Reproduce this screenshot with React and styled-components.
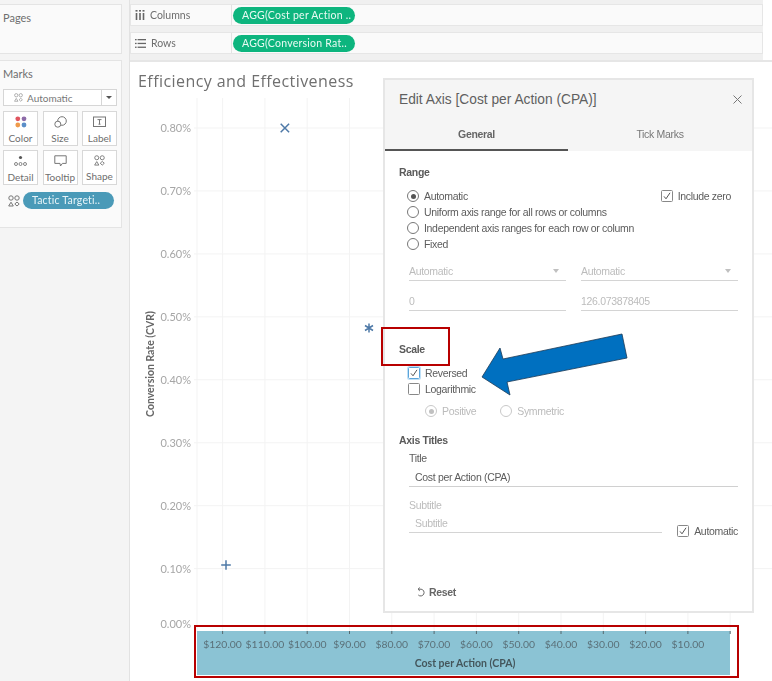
import React from 'react';
import styled, { createGlobalStyle } from 'styled-components';

const GlobalStyle = createGlobalStyle`
  html, body {
    margin: 0;
    padding: 0;
    background: #fff;
  }
  * {
    box-sizing: border-box;
  }
`;

const Root = styled.div`
  position: relative;
  width: 772px;
  height: 681px;
  overflow: hidden;
  background: #fff;
`;

const Shot = styled.div`
  position: relative;
  display: grid;
  grid-template-columns: 130px 1fr;
  height: 100%;
  filter: blur(0.45px);
  font-family: 'Lato', 'Liberation Sans', sans-serif;
`;

const LeftColumn = styled.div`
  display: flex;
  flex-direction: column;
  gap: 6px;
  padding: 4px 7px 0 0;
  background: #f4f4f4;
  border-right: 1px solid #e2e2e2;
`;

const Card = styled.section`
  height: ${p => p.$height}px;
  padding: 6px 4px 0 3px;
  background: #fafafa;
  border: 1px solid #e4e4e4;
  border-left: 0;
`;

const CardTitle = styled.div`
  height: 16px;
  font-size: 11px;
  line-height: 14px;
  color: #6e6e6e;
`;

const MarkSelect = styled.div`
  display: flex;
  align-items: center;
  height: 17px;
  margin-top: 6px;
  padding-left: 10px;
  gap: 4px;
  font-size: 10px;
  color: #777;
  background: #fff;
  border: 1px solid #d6d6d6;
`;

const SelectCaret = styled.span`
  display: flex;
  align-items: center;
  justify-content: center;
  align-self: stretch;
  width: 15px;
  margin-left: auto;
  border-left: 1px solid #d6d6d6;
  &::after {
    content: '';
    border-left: 3px solid transparent;
    border-right: 3px solid transparent;
    border-top: 3px solid #555;
  }
`;

const MarkGrid = styled.div`
  display: grid;
  grid-template-columns: repeat(3, 35px);
  grid-auto-rows: 35px;
  justify-content: space-between;
  row-gap: 4px;
  margin-top: 5px;
`;

const MarkButton = styled.div`
  display: flex;
  flex-direction: column;
  align-items: center;
  padding-top: 4px;
  font-size: 10px;
  line-height: 13px;
  color: #6e6e6e;
  background: #fff;
  border: 1px solid #d8d8d8;
  svg {
    display: block;
    margin-bottom: 4px;
  }
`;

const MarkField = styled.div`
  display: flex;
  align-items: center;
  gap: 3px;
  margin-top: 7px;
  padding-left: 5px;
`;

const FieldPill = styled.div`
  height: 17px;
  width: 91px;
  padding-left: 9px;
  font-size: 10.5px;
  line-height: 16px;
  letter-spacing: 0.2px;
  color: #e8f4f8;
  background: #4a9ab8;
  border-radius: 9px;
`;

const RightColumn = styled.div`
  display: flex;
  flex-direction: column;
  min-width: 0;
`;

const ShelfStrip = styled.div`
  display: flex;
  flex-direction: column;
  gap: 6px;
  width: 633px;
  height: 60px;
  padding-top: 4px;
  background: #f0f0f0;
`;

const Shelf = styled.div`
  display: flex;
  align-items: center;
  height: 22px;
  background: #fafafa;
  border: 1px solid #e6e6e6;
`;

const ShelfLabel = styled.div`
  display: flex;
  align-items: center;
  gap: 5px;
  width: 101px;
  height: 100%;
  padding-left: 4px;
  font-size: 10.5px;
  color: #6e6e6e;
  border-right: 1px solid #e2e2e2;
`;

const ShelfPill = styled.div`
  width: 122px;
  height: 17px;
  margin-left: 1px;
  padding-left: 9px;
  font-size: 10.5px;
  line-height: 16px;
  letter-spacing: 0.25px;
  color: #eafaf3;
  background: #0db57e;
  border-radius: 9px;
`;

const ChartPanel = styled.div`
  flex: 1;
  background: #fff;
  border-top: 2px solid #e6e6e6;
  svg {
    display: block;
  }
`;

const Dialog = styled.div`
  position: absolute;
  top: 80px;
  left: 385px;
  width: 367px;
  height: 531px;
  background: #fff;
  box-shadow: 0 0 0 2px #e6e6e6;
  font-family: 'Liberation Sans', Arial, sans-serif;
  font-size: 10.5px;
  letter-spacing: -0.32px;
  color: #555;
`;

const DialogHead = styled.div`
  height: 71px;
  background: #f5f5f5;
`;

const DialogTitle = styled.div`
  display: flex;
  align-items: center;
  justify-content: space-between;
  height: 39px;
  padding: 0 10px 0 14px;
  font-size: 13.75px;
  letter-spacing: 0;
  color: #5f5f5f;
`;

const Tabs = styled.div`
  display: grid;
  grid-template-columns: 183px 1fr;
  height: 32px;
`;

const Tab = styled.div`
  text-align: center;
  font-size: 10.5px;
  line-height: 30px;
  font-weight: ${p => (p.$active ? 700 : 400)};
  color: ${p => (p.$active ? '#666' : '#777')};
  border-bottom: 2.5px solid ${p => (p.$active ? '#555' : 'transparent')};
`;

const DialogBody = styled.div`
  padding: 0 14px;
`;

const Heading = styled.div`
  height: 14px;
  margin-top: ${p => p.$top}px;
  font-weight: 700;
  font-size: 10.5px;
  line-height: 14px;
  color: #5a5a5a;
`;

const Options = styled.div`
  margin-top: 9px;
`;

const OptionRow = styled.div`
  display: flex;
  align-items: center;
  justify-content: space-between;
  height: ${p => p.$height || 16}px;
  padding: 0 7px 0 9px;
`;

const Option = styled.label`
  display: flex;
  align-items: center;
  gap: 5px;
  color: ${p => (p.$muted ? '#bbb' : '#5c5c5c')};
`;

const Radio = styled.span`
  position: relative;
  display: block;
  flex: none;
  width: 12px;
  height: 12px;
  margin-left: -1px;
  border-radius: 50%;
  border: 1px solid ${p => (p.$muted ? '#c8c8c8' : '#777')};
  &::after {
    content: '';
    display: ${p => (p.$on ? 'block' : 'none')};
    position: absolute;
    inset: 2.5px;
    border-radius: 50%;
    background: ${p => (p.$muted ? '#c0c0c0' : '#555')};
  }
`;

const Check = styled.span`
  display: flex;
  align-items: center;
  justify-content: center;
  flex: none;
  width: 12px;
  height: 12px;
  border-radius: 1.5px;
  border: 1px solid ${p => (p.$focus ? '#5ba4d9' : '#888')};
  box-shadow: ${p => (p.$focus ? '0 0 0 1px #bfe0f7' : 'none')};
`;

const TwoFields = styled.div`
  display: grid;
  grid-template-columns: 157px 157px;
  column-gap: 15px;
  margin: ${p => p.$top}px 0 0 10px;
`;

const Field = styled.div`
  display: flex;
  align-items: center;
  justify-content: space-between;
  height: 19px;
  padding: 0 7px 0 ${p => p.$indent || 0}px;
  color: ${p => (p.$muted ? '#bcbcbc' : '#5c5c5c')};
  border-bottom: 1px solid ${p => (p.$muted ? '#d4d4d4' : '#d0d0d0')};
  ${p => p.$caret && `
    &::after {
      content: '';
      border-left: 3.5px solid transparent;
      border-right: 3.5px solid transparent;
      border-top: 4px solid #c0c0c0;
    }
  `}
`;

const SubRadios = styled.div`
  display: flex;
  align-items: center;
  gap: 25px;
  height: 16px;
  margin-top: 6px;
  padding-left: 27px;
`;

const Indented = styled.div`
  margin-left: 10px;
`;

const FieldLabel = styled.div`
  height: 14px;
  margin: ${p => p.$top}px 0 ${p => p.$bottom || 0}px;
  line-height: 14px;
  color: ${p => (p.$muted ? '#bcbcbc' : '#5c5c5c')};
`;

const SubtitleRow = styled.div`
  display: flex;
  align-items: flex-end;
  justify-content: space-between;
  margin-top: 2px;
`;

const SubtitleField = styled.div`
  width: 253px;
`;

const AutoOption = styled(Option)`
  margin-bottom: -4px;
`;

const ResetButton = styled.div`
  display: flex;
  align-items: center;
  gap: 4px;
  height: 14px;
  margin: 52px 0 0 17px;
  font-weight: 700;
  color: #666;
`;

const Annotations = styled.div`
  position: absolute;
  inset: 0;
  pointer-events: none;
`;

const RedBox = styled.div`
  position: absolute;
  left: ${p => p.$x}px;
  top: ${p => p.$y}px;
  width: ${p => p.$w}px;
  height: ${p => p.$h}px;
  border: 2px solid #b80000;
`;

const ArrowSvg = styled.svg`
  position: absolute;
  top: 0;
  left: 0;
`;

const ColumnsIcon = () => (
  <svg width="10" height="10" viewBox="0 0 10 10" fill="#666">
    <rect x="0.5" y="0" width="2" height="1.6" />
    <rect x="4" y="0" width="2" height="1.6" />
    <rect x="7.5" y="0" width="2" height="1.6" />
    <rect x="0.7" y="3" width="1.6" height="7" />
    <rect x="4.2" y="3" width="1.6" height="7" />
    <rect x="7.7" y="3" width="1.6" height="7" />
  </svg>
);

const RowsIcon = () => (
  <svg width="11" height="9" viewBox="0 0 11 9" fill="#666">
    <rect x="0" y="0" width="1.6" height="1.3" />
    <rect x="2.6" y="0" width="8.4" height="1.3" />
    <rect x="0" y="3.8" width="1.6" height="1.3" />
    <rect x="2.6" y="3.8" width="8.4" height="1.3" />
    <rect x="0" y="7.6" width="1.6" height="1.3" />
    <rect x="2.6" y="7.6" width="8.4" height="1.3" />
  </svg>
);

const ShapesIcon = ({ size = 11, color = '#777' }) => (
  <svg width={size} height={size} viewBox="0 0 12 12" fill="none" stroke={color} strokeWidth="1">
    <circle cx="3" cy="3" r="2.2" />
    <circle cx="9" cy="3" r="2.2" />
    <path d="M3 7.2 5.3 11H.7z" />
    <path d="M9 7 11.2 9 9 11 6.8 9z" />
  </svg>
);

const ColorIcon = () => (
  <svg width="12" height="12" viewBox="0 0 12 12">
    <circle cx="2.8" cy="2.8" r="2.4" fill="#e0555f" />
    <circle cx="9" cy="2.8" r="2.4" fill="#8d6ba8" />
    <circle cx="2.8" cy="9" r="2.4" fill="#ef9a4a" />
    <circle cx="9" cy="9" r="2.4" fill="#5b8fc9" />
  </svg>
);

const SizeIcon = () => (
  <svg width="13" height="12" viewBox="0 0 13 12" fill="none" stroke="#777" strokeWidth="1">
    <circle cx="8" cy="5" r="4.3" />
    <circle cx="3.8" cy="8.2" r="3" fill="#fff" />
  </svg>
);

const LabelIcon = () => (
  <svg width="13" height="12" viewBox="0 0 13 12" fill="none" stroke="#777" strokeWidth="1">
    <rect x="0.5" y="1" width="12" height="9.5" />
    <path d="M4.5 3.6h4M6.5 3.6v4.6M5.5 8.2h2" />
  </svg>
);

const DetailIcon = () => (
  <svg width="13" height="12" viewBox="0 0 13 12" fill="none" stroke="#777" strokeWidth="0.9">
    <circle cx="6.5" cy="2.5" r="1.6" fill="#555" stroke="none" />
    <circle cx="2" cy="9" r="1.5" />
    <circle cx="6.5" cy="9" r="1.5" />
    <circle cx="11" cy="9" r="1.5" />
  </svg>
);

const TooltipIcon = () => (
  <svg width="13" height="12" viewBox="0 0 13 12" fill="none" stroke="#777" strokeWidth="1">
    <path d="M.8.8h11.4v7.6H8.4L6.5 11 6 8.4H.8z" />
  </svg>
);

const Tick = () => (
  <svg width="8" height="8" viewBox="0 0 8 8" fill="none" stroke="#555" strokeWidth="1">
    <path d="M1 4.4 3 6.8 7 .8" />
  </svg>
);

const CloseIcon = () => (
  <svg width="9" height="9" viewBox="0 0 9 9" stroke="#777" strokeWidth="1">
    <path d="M.5.5l8 8M8.5.5l-8 8" />
  </svg>
);

const ResetIcon = () => (
  <svg width="9" height="10" viewBox="0 0 9 10" fill="none" stroke="#666" strokeWidth="1">
    <path d="M2.5 2.2h2.6a3.4 3.4 0 1 1-2.8 5.8" />
    <path d="M3.8.6 2 2.2l1.8 1.7" />
  </svg>
);

// chart is drawn in page coordinates, shifted by the panel's origin
const CHART_X = 130;
const CHART_Y = 62;
const yTicks = ['0.80%', '0.70%', '0.60%', '0.50%', '0.40%', '0.30%', '0.20%', '0.10%', '0.00%'];
const xTicks = ['$120.00', '$110.00', '$100.00', '$90.00', '$80.00', '$70.00', '$60.00', '$50.00', '$40.00', '$30.00', '$20.00', '$10.00', ''];
const rowY = i => 128 + i * 62.95;
const colX = i => 222.6 + i * 42.3;

const Chart = () => (
  <svg width="642" height="619" viewBox={`${CHART_X} ${CHART_Y} 642 619`}>
    <text x="138" y="87" fontFamily="'Open Sans', sans-serif" fontSize="16" letterSpacing="0.43" fill="#6f6f6f">
      Efficiency and Effectiveness
    </text>
    <text
      transform="translate(154 364) rotate(-90)"
      textAnchor="middle"
      fontFamily="Lato, sans-serif"
      fontSize="10.5"
      fontWeight="700"
      fill="#666"
    >
      Conversion Rate (CVR)
    </text>
    <g stroke="#f3f3f3" strokeWidth="1">
      <line x1="197" y1="98" x2="197" y2="632" />
      {xTicks.map((_, i) => (
        <line key={i} x1={colX(i)} y1="98" x2={colX(i)} y2="632" />
      ))}
      {yTicks.slice(0, 8).map((_, i) => (
        <line key={i} x1="194" y1={rowY(i)} x2="772" y2={rowY(i)} />
      ))}
    </g>
    <g fontFamily="Lato, sans-serif" fontSize="11" fill="#a6a6a6" textAnchor="end">
      {yTicks.map((t, i) => (
        <text key={t} x="191" y={i === 8 ? 628 : rowY(i) + 4}>
          {t}
        </text>
      ))}
    </g>
    <g stroke="#4e79a7" strokeWidth="1.5" fill="none">
      <path d="M280.7 123.8l8.4 8.4M289.1 123.8l-8.4 8.4" />
      <path d="M369 323.5v9M365 325.5l8 5M373 325.5l-8 5" />
      <path d="M226 560.2v9.6M221.2 565h9.6" />
    </g>
    <rect x="197" y="631" width="533" height="44" fill="#8bc3d4" />
    <g stroke="#56696f" strokeWidth="1">
      {xTicks.map((_, i) => (
        <line key={i} x1={colX(i)} y1="631" x2={colX(i)} y2="634" />
      ))}
    </g>
    <g fontFamily="Lato, sans-serif" fontSize="10.4" fill="#5a7078" textAnchor="middle">
      {xTicks.map((t, i) => (
        <text key={i} x={colX(i)} y="648">
          {t}
        </text>
      ))}
    </g>
    <text x="465" y="667" textAnchor="middle" fontFamily="Lato, sans-serif" fontSize="10.5" fontWeight="700" fill="#44565c">
      Cost per Action (CPA)
    </text>
  </svg>
);

const markButtons = [
  { title: 'Color', Icon: ColorIcon },
  { title: 'Size', Icon: SizeIcon },
  { title: 'Label', Icon: LabelIcon },
  { title: 'Detail', Icon: DetailIcon },
  { title: 'Tooltip', Icon: TooltipIcon },
  { title: 'Shape', Icon: ShapesIcon },
];

const rangeOptions = ['Uniform axis range for all rows or columns', 'Independent axis ranges for each row or column', 'Fixed'];

const EditAxisDialog = () => (
  <Dialog>
    <DialogHead>
      <DialogTitle>
        Edit Axis [Cost per Action (CPA)]
        <CloseIcon />
      </DialogTitle>
      <Tabs>
        <Tab $active>General</Tab>
        <Tab>Tick Marks</Tab>
      </Tabs>
    </DialogHead>
    <DialogBody>
      <Heading $top={14}>Range</Heading>
      <Options>
        <OptionRow>
          <Option>
            <Radio $on />
            Automatic
          </Option>
          <Option>
            <Check>
              <Tick />
            </Check>
            Include zero
          </Option>
        </OptionRow>
        {rangeOptions.map(label => (
          <OptionRow key={label}>
            <Option>
              <Radio />
              {label}
            </Option>
          </OptionRow>
        ))}
      </Options>
      <TwoFields $top={10}>
        <Field $muted $caret>Automatic</Field>
        <Field $muted $caret>Automatic</Field>
      </TwoFields>
      <TwoFields $top={11}>
        <Field $muted>0</Field>
        <Field $muted>126.073878405</Field>
      </TwoFields>
      <Heading $top={31}>Scale</Heading>
      <Options>
        <OptionRow>
          <Option>
            <Check $focus>
              <Tick />
            </Check>
            Reversed
          </Option>
        </OptionRow>
        <OptionRow>
          <Option>
            <Check />
            Logarithmic
          </Option>
        </OptionRow>
      </Options>
      <SubRadios>
        <Option $muted>
          <Radio $on $muted />
          Positive
        </Option>
        <Option $muted>
          <Radio $muted />
          Symmetric
        </Option>
      </SubRadios>
      <Heading $top={14}>Axis Titles</Heading>
      <Indented>
        <FieldLabel $top={4} $bottom={3}>Title</FieldLabel>
        <Field $indent={6}>Cost per Action (CPA)</Field>
        <FieldLabel $top={11} $muted>Subtitle</FieldLabel>
        <SubtitleRow>
          <SubtitleField>
            <Field $indent={6} $muted>Subtitle</Field>
          </SubtitleField>
          <AutoOption>
            <Check>
              <Tick />
            </Check>
            Automatic
          </AutoOption>
        </SubtitleRow>
      </Indented>
      <ResetButton>
        <ResetIcon />
        Reset
      </ResetButton>
    </DialogBody>
  </Dialog>
);

const App = () => (
  <Root>
    <GlobalStyle />
    <Shot>
      <LeftColumn>
        <Card $height={50}>
          <CardTitle>Pages</CardTitle>
        </Card>
        <Card $height={168}>
          <CardTitle>Marks</CardTitle>
          <MarkSelect>
            <ShapesIcon size={9} color="#999" />
            Automatic
            <SelectCaret />
          </MarkSelect>
          <MarkGrid>
            {markButtons.map(({ title, Icon }) => (
              <MarkButton key={title}>
                <Icon />
                {title}
              </MarkButton>
            ))}
          </MarkGrid>
          <MarkField>
            <ShapesIcon size={12} />
            <FieldPill>Tactic Targeti..</FieldPill>
          </MarkField>
        </Card>
      </LeftColumn>
      <RightColumn>
        <ShelfStrip>
          <Shelf>
            <ShelfLabel>
              <ColumnsIcon />
              Columns
            </ShelfLabel>
            <ShelfPill>AGG(Cost per Action ..</ShelfPill>
          </Shelf>
          <Shelf>
            <ShelfLabel>
              <RowsIcon />
              Rows
            </ShelfLabel>
            <ShelfPill>AGG(Conversion Rat..</ShelfPill>
          </Shelf>
        </ShelfStrip>
        <ChartPanel>
          <Chart />
        </ChartPanel>
      </RightColumn>
      <EditAxisDialog />
    </Shot>
    <Annotations>
      <RedBox $x={381} $y={327} $w={69} $h={39} />
      <RedBox $x={194} $y={625} $w={545} $h={53} />
      <ArrowSvg width="772" height="681" viewBox="0 0 772 681">
        <path
          d="M482 377 500 348 503 359 622 334 627 358 507 382 510 395z"
          fill="#0070c0"
          stroke="#1d3b57"
          strokeWidth="0.8"
        />
      </ArrowSvg>
    </Annotations>
  </Root>
);

export default App;
